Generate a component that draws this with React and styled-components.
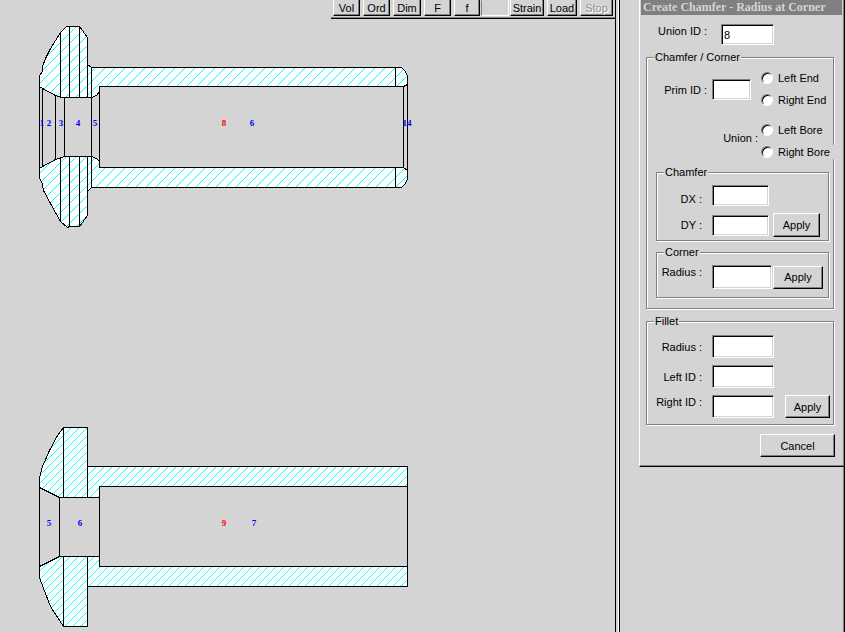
import React from "react";
import styled, { createGlobalStyle, css } from "styled-components";

const GlobalStyle = createGlobalStyle`
  * { box-sizing: border-box; }
  body {
    margin: 0;
    background: #d4d4d4;
    color: #000;
    font: 11px/14px "Liberation Sans", Arial, sans-serif;
  }
  button, input { font: inherit; color: inherit; }
`;

const raised = css`
  border: 1px solid;
  border-color: #fff #000 #000 #fff;
  box-shadow: inset -1px -1px 0 #808080;
`;

const Page = styled.div`
  display: flex;
  min-height: 100vh;
  overflow: hidden;
`;

const Workspace = styled.main`
  flex: 1 1 0;
  min-width: 0;
  border-right: 1px solid #000;
`;

const Splitter = styled.div`
  flex: 0 0 4px;
  border-right: 1px solid #000;
  box-shadow: inset -1px 0 0 #fff;
`;

const Toolbar = styled.div`
  display: flex;
  gap: 3px;
  width: fit-content;
  height: 19px;
  margin-left: auto;
  padding: 0 2px 2px;
  border-bottom: 1px solid #000;
  box-shadow: inset 0 -1px 0 #808080;
`;

const ToolButton = styled.button`
  ${raised}
  width: ${(p) => p.$width}px;
  height: 16px;
  padding: 0;
  border-top: 0;
  background: #d4d4d4;
  white-space: nowrap;
  &:disabled {
    color: #909090;
    text-shadow: 1px 1px 0 #fff;
  }
`;

const ToolWell = styled.div`
  width: 28px;
  height: 16px;
  margin: 0 -2px;
  border: 1px solid;
  border-color: transparent #fff #fff #808080;
`;

const Drawing = styled.svg`
  display: block;
  width: 100%;
  height: auto;
  shape-rendering: crispEdges;
`;

const Section = styled.path`
  fill: url(#${(p) => p.$hatch});
  stroke: #000;
`;

const Edge = styled.path`
  fill: none;
  stroke: #000;
`;

const PartNumber = styled.text`
  fill: ${(p) => (p.$union ? "#f00" : "#00f")};
  font: bold 9px "Liberation Serif", serif;
  text-anchor: middle;
`;

const Side = styled.aside`
  flex: 0 0 225px;
  padding-left: 19px;
  border-right: 1px solid #000;
  box-shadow: inset -1px 0 0 #808080;
`;

const Dialog = styled.form`
  padding: 0 8px 9px 6px;
  border: solid;
  border-width: 0 0 1px 1px;
  border-color: #000 #000 #000 #fff;
  box-shadow: inset -1px -1px 0 #808080;
`;

const Title = styled.h1`
  height: 15px;
  margin: 0 -6px 9px -5px;
  padding-left: 2px;
  background: #808080;
  color: #d4d4d4;
  font: bold 12px/14px "Liberation Serif", serif;
  white-space: nowrap;
`;

const Group = styled.fieldset`
  min-width: 0;
  height: ${(p) => p.$height}px;
  margin: 0;
  padding: 0;
  border: 1px solid #808080;
  box-shadow: 1px 1px 0 #fff, inset 1px 1px 0 #fff;
`;

const OuterGroup = styled(Group)`
  margin: 5px 2px 0 0;
`;

const InnerGroup = styled(Group)`
  margin: 0 4px 4px 9px;
`;

const Legend = styled.legend`
  height: 14px;
  margin-left: 7px;
  padding: 0 1px;
  background: #d4d4d4;
`;

const Row = styled.div`
  display: flex;
  align-items: center;
  height: ${(p) => p.$height}px;
  margin-top: ${(p) => p.$top || 0}px;
`;

const Label = styled.label`
  flex: 0 0 ${(p) => p.$width}px;
  align-self: ${(p) => p.$align || "center"};
  padding-right: ${(p) => p.$gap || 10}px;
  text-align: right;
  white-space: nowrap;
`;

const SideLabel = styled.span`
  padding-right: 3px;
  text-align: right;
`;

const Field = styled.input`
  width: ${(p) => p.$width}px;
  height: ${(p) => p.$height || 21}px;
  padding: 0 2px;
  border: 1px solid;
  border-color: #808080 #fff #fff #808080;
  border-radius: 0;
  outline: 0;
  background: #fff;
  box-shadow: inset 1px 1px 0 #000, inset -1px -1px 0 #d4d4d4;
`;

const PushButton = styled.button`
  ${raised}
  width: ${(p) => p.$width}px;
  height: ${(p) => p.$height || 23}px;
  margin-left: ${(p) => p.$gap || 0}px;
  padding: 0;
  background: #d4d4d4;
`;

const PrimLayout = styled.div`
  display: grid;
  grid-template-columns: 114px 1fr;
  height: 101px;
`;

const PrimColumn = styled.div`
  display: flex;
  flex-direction: column;
  gap: 31px;
  padding-top: 15px;
`;

const Choices = styled.div`
  display: flex;
  flex-direction: column;
  padding-top: 3px;
`;

const Choice = styled.label`
  display: flex;
  align-items: center;
  gap: 5px;
  height: 22px;
  margin-top: ${(p) => (p.$spaced ? 8 : 0)}px;
  margin-right: -4px;
  white-space: nowrap;
`;

const ChoiceText = styled.span`
  padding-right: 5px;
  background: #d4d4d4;
`;

const Radio = styled.input`
  appearance: none;
  flex: none;
  width: 12px;
  height: 12px;
  margin: 0;
  border: 1px solid;
  border-color: #808080 #fff #fff #808080;
  border-radius: 50%;
  background: #fff;
  box-shadow: inset 1px 1px 0 #000;
  &:checked { background: radial-gradient(#000 2px, #fff 3px); }
`;

const Footer = styled.div`
  display: flex;
  justify-content: flex-end;
  padding: 9px 1px 0 0;
`;

const tools = [
  ["Vol", 27],
  ["Ord", 27],
  ["Dim", 28],
  ["F", 27],
  ["f", 26],
];

/* One 45-degree hatch line per square tile, drawn pixel by pixel. */
function HatchPattern({ id, size }) {
  const pixels = Array.from(
    { length: size },
    (_, x) => `M${x} ${(size + 2 - x) % size}h1v1h-1z`
  ).join("");
  return (
    <pattern id={id} width={size} height={size} patternUnits="userSpaceOnUse">
      <path d={`M0 0h${size}v${size}h-${size}z`} fill="#fff" />
      <path d={pixels} fill="#0ff" />
    </pattern>
  );
}

function ChamferedPart() {
  return (
    <g>
      <Section $hatch="hatch-wide" d="M39.5 75.5L42.5 71.5V66.5L45.5 58.5L50.5 48.5L60.5 32.5L66.5 26.5H79.5L87.5 37.5V64.5L91.5 67.5H401.5L404.5 70.5L407.5 75.5V84.5L403.5 86.5H99.5V91.5L96.5 95.5L91.5 97.5H61.5L55.5 95.5L42.5 88.5L39.5 86.5Z" />
      <Section $hatch="hatch-wide" d="M39.5 168.5L42.5 166.5L55.5 159.5L64.5 156.5H91.5L96.5 158.5L99.5 161.5V167.5H403.5L407.5 170.5V178.5L405.5 183.5L401.5 187.5H91.5L87.5 191.5V215.5L79.5 226.5H69.5L67.5 227.5L60.5 221.5L50.5 203.5L43.5 190.5L42.5 184.5L39.5 177.5Z" />
      <Edge d="M60.5 32V97M69.5 26V97M79.5 26V97M87.5 64V97M91.5 67V97M395.5 67V86" />
      <Edge d="M60.5 157V221M69.5 157V227M79.5 157V227M87.5 157V192M91.5 157V188M395.5 167V187" />
      <Edge d="M39.5 86V169M42.5 88V167M55.5 95V160M64.5 97V157M91.5 97V157M99.5 86V168M403.5 86V168M407.5 84V171" />
      <PartNumber x="42" y="126">1</PartNumber>
      <PartNumber x="49" y="126">2</PartNumber>
      <PartNumber x="61" y="126">3</PartNumber>
      <PartNumber x="78" y="126">4</PartNumber>
      <PartNumber x="95" y="126">5</PartNumber>
      <PartNumber x="224" y="126" $union>8</PartNumber>
      <PartNumber x="252" y="126">6</PartNumber>
      <PartNumber x="407" y="126">14</PartNumber>
    </g>
  );
}

function PlainPart() {
  return (
    <g>
      <Section $hatch="hatch-fine" d="M39.5 477.5L42.5 466.5L49.5 450.5L57.5 435.5L63.5 427.5H87.5V466.5H407.5V486.5H99.5V497.5H59.5L39.5 487.5Z" />
      <Section $hatch="hatch-fine" d="M39.5 566.5L59.5 556.5H99.5V566.5H407.5V586.5H87.5V626.5H63.5L50.5 606.5L43.5 588.5L39.5 577.5Z" />
      <Edge d="M63.5 427V497M87.5 466V497M63.5 557V627M87.5 557V587" />
      <Edge d="M39.5 487V567M59.5 497V557M99.5 486V567M407.5 486V567" />
      <PartNumber x="49" y="526">5</PartNumber>
      <PartNumber x="80" y="526">6</PartNumber>
      <PartNumber x="224" y="526" $union>9</PartNumber>
      <PartNumber x="254" y="526">7</PartNumber>
    </g>
  );
}

function FieldRow({ id, label, labelWidth, align, width, fieldHeight, height, top, children }) {
  return (
    <Row $height={height} $top={top}>
      <Label htmlFor={id} $width={labelWidth} $align={align}>{label}</Label>
      <Field id={id} $width={width} $height={fieldHeight} />
      {children}
    </Row>
  );
}

export default function App() {
  return (
    <>
      <GlobalStyle />
      <Page>
        <Workspace>
          <Toolbar>
            {tools.map(([name, width]) => (
              <ToolButton key={name} type="button" $width={width}>{name}</ToolButton>
            ))}
            <ToolWell />
            <ToolButton type="button" $width={34}>Strain</ToolButton>
            <ToolButton type="button" $width={30}>Load</ToolButton>
            <ToolButton type="button" $width={33} disabled>Stop</ToolButton>
          </Toolbar>
          <Drawing viewBox="0 19 615 613" role="img" aria-label="Cross sections of two parts">
            <defs>
              <HatchPattern id="hatch-wide" size={10} />
              <HatchPattern id="hatch-fine" size={8} />
            </defs>
            <ChamferedPart />
            <PlainPart />
          </Drawing>
        </Workspace>
        <Splitter />
        <Side>
          <Dialog onSubmit={(e) => e.preventDefault()}>
            <Title>Create Chamfer - Radius at Corner</Title>
            <Row $height={21}>
              <Label htmlFor="union-id" $width={75} $gap={14} $align="flex-start">Union ID :</Label>
              <Field id="union-id" $width={53} defaultValue="8" />
            </Row>
            <OuterGroup $height={259}>
              <Legend>Chamfer / Corner</Legend>
              <PrimLayout>
                <PrimColumn>
                  <Row $height={21}>
                    <Label htmlFor="prim-id" $width={65} $gap={5}>Prim ID :</Label>
                    <Field id="prim-id" $width={39} />
                  </Row>
                  <SideLabel id="union-side">Union :</SideLabel>
                </PrimColumn>
                <Choices>
                  <Choice><Radio type="radio" name="end" /><ChoiceText>Left End</ChoiceText></Choice>
                  <Choice><Radio type="radio" name="end" /><ChoiceText>Right End</ChoiceText></Choice>
                  <Choice $spaced><Radio type="radio" name="bore" aria-describedby="union-side" /><ChoiceText>Left Bore</ChoiceText></Choice>
                  <Choice><Radio type="radio" name="bore" aria-describedby="union-side" /><ChoiceText>Right Bore</ChoiceText></Choice>
                </Choices>
              </PrimLayout>
              <InnerGroup $height={76}>
                <Legend>Chamfer</Legend>
                <FieldRow id="dx" label="DX :" labelWidth={55} align="flex-end" width={57} height={21} top={6} />
                <FieldRow id="dy" label="DY :" labelWidth={55} width={57} height={24} top={7}>
                  <PushButton type="button" $width={47} $height={24} $gap={4}>Apply</PushButton>
                </FieldRow>
              </InnerGroup>
              <InnerGroup $height={53}>
                <Legend>Corner</Legend>
                <FieldRow id="corner-radius" label="Radius :" labelWidth={55} align="flex-start" width={60} fieldHeight={24} height={24} top={6}>
                  <PushButton type="button" $width={50} $gap={1}>Apply</PushButton>
                </FieldRow>
              </InnerGroup>
            </OuterGroup>
            <OuterGroup $height={111}>
              <Legend>Fillet</Legend>
              <FieldRow id="fillet-radius" label="Radius :" labelWidth={65} width={62} fieldHeight={23} height={23} top={7} />
              <FieldRow id="left-id" label="Left ID :" labelWidth={65} width={62} fieldHeight={23} height={23} top={7} />
              <FieldRow id="right-id" label="Right ID :" labelWidth={65} align="flex-start" width={62} fieldHeight={23} height={23} top={7}>
                <PushButton type="button" $width={45} $gap={11}>Apply</PushButton>
              </FieldRow>
            </OuterGroup>
            <Footer>
              <PushButton type="button" $width={75}>Cancel</PushButton>
            </Footer>
          </Dialog>
        </Side>
      </Page>
    </>
  );
}
